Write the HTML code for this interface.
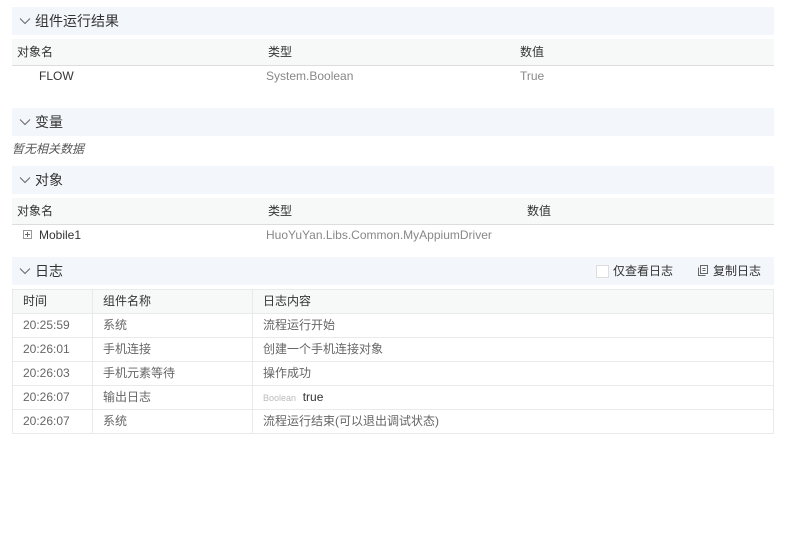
<!DOCTYPE html><html><head><meta charset="utf-8"><style>
body{margin:0;width:788px;height:539px;background:#fff;font-family:"Liberation Sans","Noto Sans CJK SC",sans-serif;position:relative;overflow:hidden}
.a{position:absolute}
.h{position:absolute;left:12px;width:762px;height:28px;background:#f3f6fa;font-size:14px;color:#333;line-height:28px}
.h span{position:absolute;left:23px}
.h svg{position:absolute;left:7px;top:10px}
.th{position:absolute;left:12px;width:762px;height:26px;background:#f7f8f8;border-bottom:1px solid #ddd;font-size:12px;color:#333;line-height:26px}
.t{font-size:12px;line-height:16px;color:#333}
.g{color:#888}
table{position:absolute;left:12px;top:289px;width:762px;border-collapse:collapse;font-size:12px;color:#666;table-layout:fixed}
td{border:1px solid #e8eaec;height:23px;padding:0 0 0 10px;line-height:23px;white-space:nowrap;overflow:hidden}
tr{height:24px}
tr:first-child td{background:#f7f8f8;color:#333}
</style></head><body>
<div class="h" style="top:7px"><svg width="12" height="8"><path d="M1 1.5L6 6.5L11 1.5" fill="none" stroke="#666" stroke-width="1"/></svg><span>组件运行结果</span></div>
<div class="th" style="top:39px"><span class="a" style="left:5px">对象名</span><span class="a" style="left:256px">类型</span><span class="a" style="left:508px">数值</span></div>
<div class="a t" style="left:39px;top:68px">FLOW</div>
<div class="a t g" style="left:266px;top:68px">System.Boolean</div>
<div class="a t g" style="left:520px;top:68px">True</div>
<div class="h" style="top:108px"><svg width="12" height="8"><path d="M1 1.5L6 6.5L11 1.5" fill="none" stroke="#666" stroke-width="1"/></svg><span>变量</span></div>
<div class="a t" style="left:12px;top:141px;font-style:italic;color:#555">暂无相关数据</div>
<div class="h" style="top:166px"><svg width="12" height="8"><path d="M1 1.5L6 6.5L11 1.5" fill="none" stroke="#666" stroke-width="1"/></svg><span>对象</span></div>
<div class="th" style="top:198px"><span class="a" style="left:5px">对象名</span><span class="a" style="left:256px">类型</span><span class="a" style="left:515px">数值</span></div>
<svg class="a" style="left:23px;top:230px" width="9" height="9"><rect x=".5" y=".5" width="8" height="8" fill="none" stroke="#999"/><path d="M2 4.5H7M4.5 2V7" stroke="#666"/></svg>
<div class="a t" style="left:39px;top:227px">Mobile1</div>
<div class="a t g" style="left:266px;top:227px">HuoYuYan.Libs.Common.MyAppiumDriver</div>
<div class="h" style="top:257px"><svg width="12" height="8"><path d="M1 1.5L6 6.5L11 1.5" fill="none" stroke="#666" stroke-width="1"/></svg><span>日志</span>
<div class="a" style="left:584px;top:8px;width:11px;height:11px;border:1px solid #ddd;background:#fff"></div>
<span style="left:601px;font-size:12px">仅查看日志</span>
<svg class="a" style="left:686px;top:8px" width="10" height="11"><rect x="2.5" y=".5" width="7" height="8" fill="none" stroke="#666"/><path d="M.5 2.5V10.5H7.5M4.5 3.5H7.5M4.5 5.5H7.5" fill="none" stroke="#666"/></svg>
<span style="left:701px;font-size:12px">复制日志</span></div>
<table>
<colgroup><col style="width:80px"><col style="width:160px"><col></colgroup>
<tr><td>时间</td><td>组件名称</td><td>日志内容</td></tr>
<tr><td>20:25:59</td><td>系统</td><td>流程运行开始</td></tr>
<tr><td>20:26:01</td><td>手机连接</td><td>创建一个手机连接对象</td></tr>
<tr><td>20:26:03</td><td>手机元素等待</td><td>操作成功</td></tr>
<tr><td>20:26:07</td><td>输出日志</td><td><span style="font-size:9px;color:#bbb;line-height:10px">Boolean</span>&nbsp; <span style="color:#333">true</span></td></tr>
<tr><td>20:26:07</td><td>系统</td><td>流程运行结束(可以退出调试状态)</td></tr>
</table>
</body></html>
